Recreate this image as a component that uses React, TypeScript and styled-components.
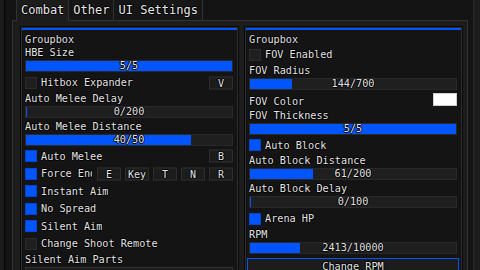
import React from 'react';
import styled, { createGlobalStyle } from 'styled-components';

const GlobalStyle = createGlobalStyle`
  html, body {
    margin: 0;
    padding: 0;
    background: #1c1c1c;
    overflow: hidden;
  }
  #root {
    width: 480px;
    height: 270px;
  }
`;

const ACCENT = '#0055ff';
const FONT = `'DejaVu Sans Mono', 'Liberation Mono', monospace`;
const STROKE = `text-shadow: 1px 0 0 #000, -1px 0 0 #000, 0 1px 0 #000, 0 -1px 0 #000;`;

interface SliderProps {
  label: string;
  value: number;
  max: number;
}

const Slider = ({ label, value, max }: SliderProps) => (
  <>
    <Label>{label}</Label>
    <Track>
      <Fill style={{ width: `${(value / max) * 100}%` }} />
      <TrackText>
        {value}/{max}
      </TrackText>
    </Track>
  </>
);

interface ToggleProps {
  label: string;
  checked?: boolean;
  keys?: string[];
  clip?: number;
}

const Toggle = ({ label, checked, keys, clip }: ToggleProps) => (
  <ToggleRow>
    <Box checked={!!checked} />
    <RowText style={clip ? { maxWidth: clip } : undefined}>{label}</RowText>
    {keys && (
      <KeyGroup>
        {keys.map((k) => (
          <KeyButton key={k}>{k}</KeyButton>
        ))}
      </KeyGroup>
    )}
  </ToggleRow>
);

const App = () => {
  return (
    <>
      <GlobalStyle />
      <Window>
        <Inner>
          <TabRow>
            <Tab active>Combat</Tab>
            <Tab>Other</Tab>
            <Tab>UI Settings</Tab>
          </TabRow>
          <TabContent>
            <Groupbox>
              <AccentBar />
              <GroupBody>
                <Label>Groupbox</Label>
                <Slider label="HBE Size" value={5} max={5} />
                <Toggle label="Hitbox Expander" keys={['V']} />
                <Slider label="Auto Melee Delay" value={0} max={200} />
                <Slider label="Auto Melee Distance" value={40} max={50} />
                <Toggle label="Auto Melee" checked keys={['B']} />
                <Toggle
                  label="Force End Round"
                  checked
                  clip={51}
                  keys={['E', 'Key', 'T', 'N', 'R']}
                />
                <Toggle label="Instant Aim" checked />
                <Toggle label="No Spread" checked />
                <Toggle label="Silent Aim" checked />
                <Toggle label="Change Shoot Remote" />
                <Label>Silent Aim Parts</Label>
                <Dropdown />
              </GroupBody>
            </Groupbox>
            <Groupbox>
              <AccentBar />
              <GroupBody>
                <Label>Groupbox</Label>
                <Toggle label="FOV Enabled" />
                <Slider label="FOV Radius" value={144} max={700} />
                <ColorRow>
                  <RowText>FOV Color</RowText>
                  <Swatch />
                </ColorRow>
                <Slider label="FOV Thickness" value={5} max={5} />
                <Toggle label="Auto Block" checked />
                <Slider label="Auto Block Distance" value={61} max={200} />
                <Slider label="Auto Block Delay" value={0} max={100} />
                <Toggle label="Arena HP" checked />
                <Slider label="RPM" value={2413} max={10000} />
                <Button>Change RPM</Button>
              </GroupBody>
            </Groupbox>
          </TabContent>
        </Inner>
      </Window>
    </>
  );
};

export default App;

const Window = styled.div`
  width: 480px;
  height: 270px;
  box-sizing: border-box;
  overflow: hidden;
  background: #1c1c1c;
  padding: 0 6px 0 4px;
  display: flex;
  font-family: ${FONT};
  color: #e4e4e4;
`;

const Inner = styled.div`
  flex: 1;
  display: flex;
  flex-direction: column;
  background: #141414;
  border-left: 1px solid #050505;
  border-right: 1px solid #2a2a2a;
  padding: 0 5px 0 7px;
  min-width: 0;
`;

const TabRow = styled.div`
  display: flex;
  height: 20px;
  padding-left: 4px;
  flex-shrink: 0;
`;

const Tab = styled.div<{ active?: boolean }>`
  position: relative;
  z-index: ${(p) => (p.active ? 2 : 1)};
  height: ${(p) => (p.active ? '21px' : '20px')};
  box-sizing: border-box;
  padding: 0 4px;
  border: 1px solid #323232;
  border-top: none;
  border-bottom: none;
  margin-right: -1px;
  background: ${(p) => (p.active ? '#1c1c1c' : '#161616')};
  font-size: 12px;
  line-height: 21px;
  color: #e8e8e8;
  ${STROKE}
`;

const TabContent = styled.div`
  flex: 1;
  display: flex;
  gap: 7px;
  align-items: flex-start;
  background: #1c1c1c;
  border: 1px solid #323232;
  border-bottom: none;
  padding: 6px 4px 0 8px;
  min-height: 0;
`;

const Groupbox = styled.div`
  width: 217px;
  height: 300px;
  flex-shrink: 0;
  box-sizing: border-box;
  background: #141414;
  border: 1px solid #2c2c2c;
  box-shadow: 0 0 0 1px #0a0a0a;
`;

const AccentBar = styled.div`
  height: 2px;
  background: ${ACCENT};
`;

const GroupBody = styled.div`
  display: flex;
  flex-direction: column;
  padding: 3px 4px 0 3px;
`;

const Label = styled.div`
  height: 13px;
  line-height: 13px;
  font-size: 10.2px;
  white-space: nowrap;
  ${STROKE}
`;

const RowText = styled.span`
  font-size: 10.2px;
  white-space: nowrap;
  overflow: hidden;
  ${STROKE}
`;

const Track = styled.div`
  position: relative;
  height: 12px;
  margin: 1px 0 2px;
  box-sizing: border-box;
  background: #1f1f1f;
  border: 1px solid #292929;
  overflow: hidden;
`;

const Fill = styled.div`
  height: 100%;
  min-width: 1px;
  background: ${ACCENT};
`;

const TrackText = styled.div`
  position: absolute;
  inset: 0;
  text-align: center;
  font-size: 10.2px;
  line-height: 10px;
  ${STROKE}
`;

const ToggleRow = styled.div`
  position: relative;
  height: 17.5px;
  display: flex;
  align-items: center;
  gap: 4px;
`;

const Box = styled.div<{ checked: boolean }>`
  width: 12px;
  height: 12px;
  flex-shrink: 0;
  box-sizing: border-box;
  background: ${(p) => (p.checked ? ACCENT : '#1f1f1f')};
  border: 1px solid ${(p) => (p.checked ? '#0046d4' : '#2a2a2a')};
`;

const KeyGroup = styled.div`
  position: absolute;
  right: 0;
  top: 50%;
  transform: translateY(-50%);
  display: flex;
  gap: 4px;
`;

const KeyButton = styled.div`
  width: 24px;
  height: 13px;
  box-sizing: border-box;
  background: #1c1c1c;
  border: 1px solid #2e2e2e;
  font-size: 10px;
  line-height: 11px;
  text-align: center;
  ${STROKE}
`;

const ColorRow = styled.div`
  height: 17px;
  display: flex;
  align-items: center;
  justify-content: space-between;
  padding-top: 2px;
  box-sizing: border-box;
`;

const Swatch = styled.div`
  width: 24px;
  height: 13px;
  box-sizing: border-box;
  background: #ffffff;
  border: 1px solid #d0d0d0;
  margin-top: -4px;
`;

const Button = styled.div`
  margin: 2px -2px 0;
  height: 18px;
  box-sizing: border-box;
  background: #1c1c1c;
  border: 1px solid ${ACCENT};
  font-size: 10.2px;
  line-height: 16px;
  text-align: center;
  ${STROKE}
`;

const Dropdown = styled.div`
  margin-top: 1px;
  height: 18px;
  box-sizing: border-box;
  background: #1c1c1c;
  border: 1px solid #323232;
`;
